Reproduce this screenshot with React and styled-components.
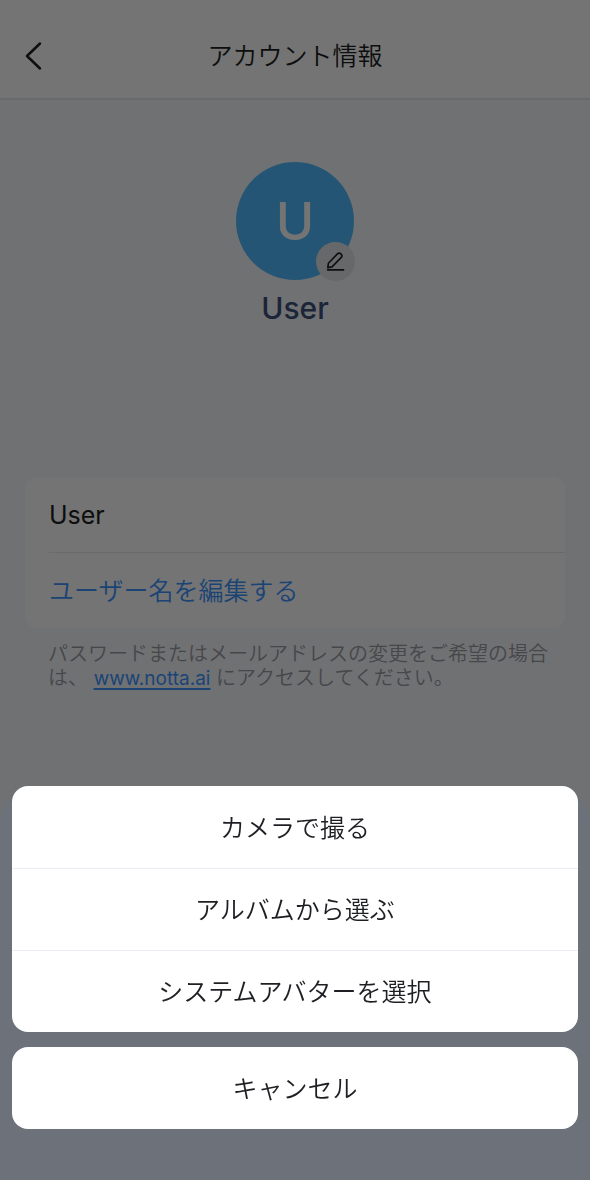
import { useState } from 'react';
import styled, { createGlobalStyle } from 'styled-components';

const GlobalStyle = createGlobalStyle`
	* {
		box-sizing: border-box;
	}

	body {
		margin: 0;
		background: #f6f8fd;
		color: #1d1f23;
		font-family: Inter, 'Noto Sans CJK JP', sans-serif;
		font-size: 25px;
		font-weight: 350;
	}

	button {
		padding: 0;
		border: 0;
		background: none;
		color: inherit;
		font: inherit;
		cursor: pointer;
	}

	h1, h2, p {
		margin: 0;
		font-weight: inherit;
	}
`;

const Page = styled.div`
	min-height: 100vh;
`;

const Header = styled.header`
	display: grid;
	grid-template-columns: 68px 1fr 68px;
	align-items: center;
	padding: 14px 0 0;
	height: 100px;
	background: #ffffff;
	border-bottom: 2px solid #e6e8ee;
`;

const BackButton = styled.button`
	display: flex;
	align-items: center;
	justify-content: center;
	height: 68px;
`;

const Title = styled.h1`
	font-size: 25px;
	line-height: 36px;
	text-align: center;
`;

const Profile = styled.section`
	display: flex;
	flex-direction: column;
	align-items: center;
	padding: 62px 0 0;
	height: 377px;
`;

const Avatar = styled.div`
	position: relative;
	display: flex;
	align-items: center;
	justify-content: center;
	width: 118px;
	height: 118px;
	border-radius: 50%;
	background: #53bbff;
	color: #ffffff;
	font-size: 52px;
	font-weight: 450;
`;

const EditBadge = styled.button`
	position: absolute;
	right: -1px;
	bottom: -1px;
	display: flex;
	align-items: center;
	justify-content: center;
	width: 39px;
	height: 39px;
	border-radius: 50%;
	background: #e3e4e6;
	color: #1d1f23;
`;

const ProfileName = styled.h2`
	margin-top: 10px;
	color: #3e5079;
	font-size: 30px;
	font-weight: 450;
	line-height: 36px;
`;

const Card = styled.section`
	display: flex;
	flex-direction: column;
	margin: 0 25px;
	padding-left: 24px;
	border-radius: 12px;
	background: #ffffff;
`;

const CardValue = styled.div`
	display: flex;
	align-items: center;
	height: 76px;
	border-bottom: 1px solid #e6e8ee;
	font-weight: 400;
`;

const CardAction = styled.button`
	height: 75px;
	padding-bottom: 4px;
	color: #3d96ff;
	text-align: left;
`;

const Hint = styled.p`
	padding: 14px 32px 0 48px;
	color: #9a9ca2;
	font-size: 20px;
	line-height: 24px;

	& a {
		color: #3d96ff;
		font-size: 19px;
		font-weight: 400;
		text-decoration-thickness: 2px;
		text-underline-offset: 3px;
	}
`;

const Overlay = styled.div`
	position: fixed;
	inset: 0;
	display: flex;
	flex-direction: column;
	justify-content: flex-end;
	background: rgba(0, 0, 0, 0.545);
`;

const Sheet = styled.div`
	display: flex;
	flex-direction: column;
	gap: 15px;
	padding: 0 12px 51px;
	border-radius: 40px 40px 0 0;
	background: #6d7179;
`;

const SheetGroup = styled.div`
	display: flex;
	flex-direction: column;
	overflow: hidden;
	border-radius: 16px;
	background: #ffffff;
`;

const SheetButton = styled.button`
	height: 82px;
	padding-bottom: 3px;

	& + & {
		border-top: 1px solid #ececf2;
	}
`;

const ACTIONS = [
	{ id: 'camera', name: 'カメラで撮る' },
	{ id: 'album', name: 'アルバムから選ぶ' },
	{ id: 'system', name: 'システムアバターを選択' },
];

const BackIcon = () => (
	<svg width="20" height="30" viewBox="0 0 20 30" fill="none" stroke="currentColor" strokeWidth="2.5">
		<path d="M16 2.5 3 15l13 12.5" strokeLinecap="round" strokeLinejoin="round" />
	</svg>
);

const PencilIcon = () => (
	<svg width="20" height="20" viewBox="0 0 20 20" fill="none" stroke="currentColor" strokeWidth="1.6">
		<path d="M1.8 15.6 2.4 11.2 11.4 1.9a2.5 2.5 0 0 1 3.5 0l.2.2a2.5 2.5 0 0 1 0 3.5L6 14.9z" strokeLinejoin="round" />
		<path d="M1.6 17.9h16" strokeLinecap="round" />
	</svg>
);

const AvatarSheet = ({ onClose }) => (
	<Overlay>
		<Sheet role="dialog">
			<SheetGroup>
				{ACTIONS.map(({ id, name }) => (
					<SheetButton key={id} type="button" onClick={onClose}>
						{name}
					</SheetButton>
				))}
			</SheetGroup>
			<SheetGroup>
				<SheetButton type="button" onClick={onClose}>
					キャンセル
				</SheetButton>
			</SheetGroup>
		</Sheet>
	</Overlay>
);

const App = () => {
	const [isSheetOpen, setIsSheetOpen] = useState(true);

	return (
		<Page lang="ja">
			<GlobalStyle />
			<Header>
				<BackButton type="button">
					<BackIcon />
				</BackButton>
				<Title>アカウント情報</Title>
			</Header>
			<Profile>
				<Avatar>
					U
					<EditBadge type="button" onClick={() => setIsSheetOpen(true)}>
						<PencilIcon />
					</EditBadge>
				</Avatar>
				<ProfileName>User</ProfileName>
			</Profile>
			<Card>
				<CardValue>User</CardValue>
				<CardAction type="button">ユーザー名を編集する</CardAction>
			</Card>
			<Hint>
				パスワードまたはメールアドレスの変更をご希望の場合は、 <a href="https://www.notta.ai">www.notta.ai</a> にアクセスしてください。
			</Hint>
			{isSheetOpen && <AvatarSheet onClose={() => setIsSheetOpen(false)} />}
		</Page>
	);
};

export default App;
